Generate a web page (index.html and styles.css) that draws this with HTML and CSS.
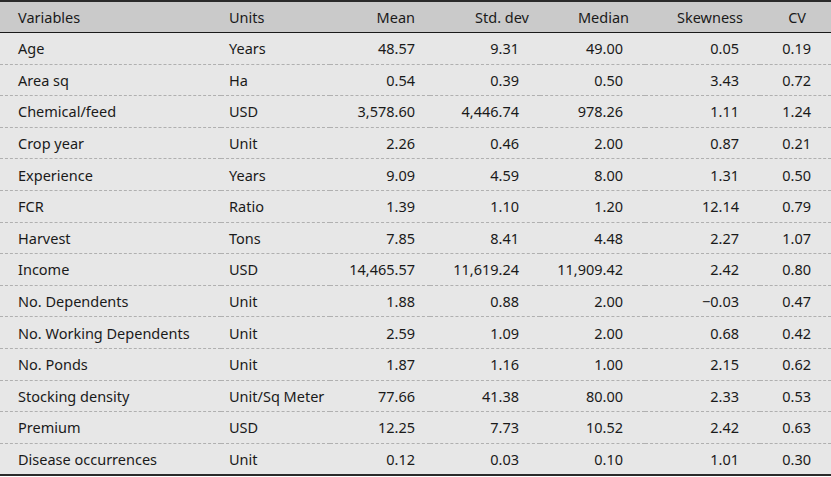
FILE: index.html
```html
<!DOCTYPE html>
<html>
<head>
<meta charset="utf-8">
<link rel="stylesheet" href="styles.css">
</head>
<body>
<table class="stats">
  <colgroup>
    <col class="c-var"><col class="c-unit"><col class="c-mean"><col class="c-sd"><col class="c-med"><col class="c-skew"><col class="c-cv">
  </colgroup>
  <thead>
    <tr>
      <th class="t-var">Variables</th>
      <th class="t-unit">Units</th>
      <th class="n-mean">Mean</th>
      <th class="n-sd">Std. dev</th>
      <th class="n-med">Median</th>
      <th class="n-skew">Skewness</th>
      <th class="n-cv">CV</th>
    </tr>
  </thead>
  <tbody>
    <tr><td class="t-var">Age</td><td class="t-unit">Years</td><td class="n-mean">48.57</td><td class="n-sd">9.31</td><td class="n-med">49.00</td><td class="n-skew">0.05</td><td class="n-cv">0.19</td></tr>
    <tr><td class="t-var">Area sq</td><td class="t-unit">Ha</td><td class="n-mean">0.54</td><td class="n-sd">0.39</td><td class="n-med">0.50</td><td class="n-skew">3.43</td><td class="n-cv">0.72</td></tr>
    <tr><td class="t-var">Chemical/feed</td><td class="t-unit">USD</td><td class="n-mean">3,578.60</td><td class="n-sd">4,446.74</td><td class="n-med">978.26</td><td class="n-skew">1.11</td><td class="n-cv">1.24</td></tr>
    <tr><td class="t-var">Crop year</td><td class="t-unit">Unit</td><td class="n-mean">2.26</td><td class="n-sd">0.46</td><td class="n-med">2.00</td><td class="n-skew">0.87</td><td class="n-cv">0.21</td></tr>
    <tr><td class="t-var">Experience</td><td class="t-unit">Years</td><td class="n-mean">9.09</td><td class="n-sd">4.59</td><td class="n-med">8.00</td><td class="n-skew">1.31</td><td class="n-cv">0.50</td></tr>
    <tr><td class="t-var">FCR</td><td class="t-unit">Ratio</td><td class="n-mean">1.39</td><td class="n-sd">1.10</td><td class="n-med">1.20</td><td class="n-skew">12.14</td><td class="n-cv">0.79</td></tr>
    <tr><td class="t-var">Harvest</td><td class="t-unit">Tons</td><td class="n-mean">7.85</td><td class="n-sd">8.41</td><td class="n-med">4.48</td><td class="n-skew">2.27</td><td class="n-cv">1.07</td></tr>
    <tr><td class="t-var">Income</td><td class="t-unit">USD</td><td class="n-mean">14,465.57</td><td class="n-sd">11,619.24</td><td class="n-med">11,909.42</td><td class="n-skew">2.42</td><td class="n-cv">0.80</td></tr>
    <tr><td class="t-var">No. Dependents</td><td class="t-unit">Unit</td><td class="n-mean">1.88</td><td class="n-sd">0.88</td><td class="n-med">2.00</td><td class="n-skew">−0.03</td><td class="n-cv">0.47</td></tr>
    <tr><td class="t-var">No. Working Dependents</td><td class="t-unit">Unit</td><td class="n-mean">2.59</td><td class="n-sd">1.09</td><td class="n-med">2.00</td><td class="n-skew">0.68</td><td class="n-cv">0.42</td></tr>
    <tr><td class="t-var">No. Ponds</td><td class="t-unit">Unit</td><td class="n-mean">1.87</td><td class="n-sd">1.16</td><td class="n-med">1.00</td><td class="n-skew">2.15</td><td class="n-cv">0.62</td></tr>
    <tr><td class="t-var">Stocking density</td><td class="t-unit">Unit/Sq Meter</td><td class="n-mean">77.66</td><td class="n-sd">41.38</td><td class="n-med">80.00</td><td class="n-skew">2.33</td><td class="n-cv">0.53</td></tr>
    <tr><td class="t-var">Premium</td><td class="t-unit">USD</td><td class="n-mean">12.25</td><td class="n-sd">7.73</td><td class="n-med">10.52</td><td class="n-skew">2.42</td><td class="n-cv">0.63</td></tr>
    <tr><td class="t-var">Disease occurrences</td><td class="t-unit">Unit</td><td class="n-mean">0.12</td><td class="n-sd">0.03</td><td class="n-med">0.10</td><td class="n-skew">1.01</td><td class="n-cv">0.30</td></tr>
  </tbody>
</table>
</body>
</html>
```
FILE: styles.css
```css
html, body {
  margin: 0;
  padding: 0;
  background: #ffffff;
}
.stats {
  width: 831px;
  border-collapse: collapse;
  table-layout: fixed;
  font-family: "Noto Sans", "Open Sans", sans-serif;
  font-size: 14.5px;
  color: #1a1a1a;
  background: #e7e7e7;
  border-top: 2px solid #2a2a2a;
  border-bottom: 2px solid #2a2a2a;
}
.c-var { width: 221px; }
.c-unit { width: 109px; }
.c-mean { width: 100px; }
.c-sd { width: 110px; }
.c-med { width: 105px; }
.c-skew { width: 115px; }
.c-cv { width: 71px; }

.stats th {
  font-weight: normal;
  background: #cacaca;
  height: 30px;
  padding: 0;
  border-bottom: 1px solid #1a1a1a;
  vertical-align: middle;
}
.stats td {
  height: 30.6px;
  padding: 0;
  vertical-align: middle;
  border-bottom: 1px dashed #b0b0b0;
  white-space: nowrap;
}
.stats tbody tr:last-child td {
  border-bottom: none;
}
.t-var { text-align: left; padding-left: 18px !important; }
.t-unit { text-align: left; padding-left: 8px !important; }

td.n-mean { text-align: right; padding-right: 15px !important; }
th.n-mean { text-align: right; padding-right: 15px !important; }
td.n-sd { text-align: right; padding-right: 21px !important; }
th.n-sd { text-align: right; padding-right: 11px !important; }
td.n-med { text-align: right; padding-right: 22px !important; }
th.n-med { text-align: right; padding-right: 16px !important; }
td.n-skew { text-align: right; padding-right: 21px !important; }
th.n-skew { text-align: right; padding-right: 17px !important; }
td.n-cv { text-align: right; padding-right: 20px !important; }
th.n-cv { text-align: right; padding-right: 25px !important; }
```
